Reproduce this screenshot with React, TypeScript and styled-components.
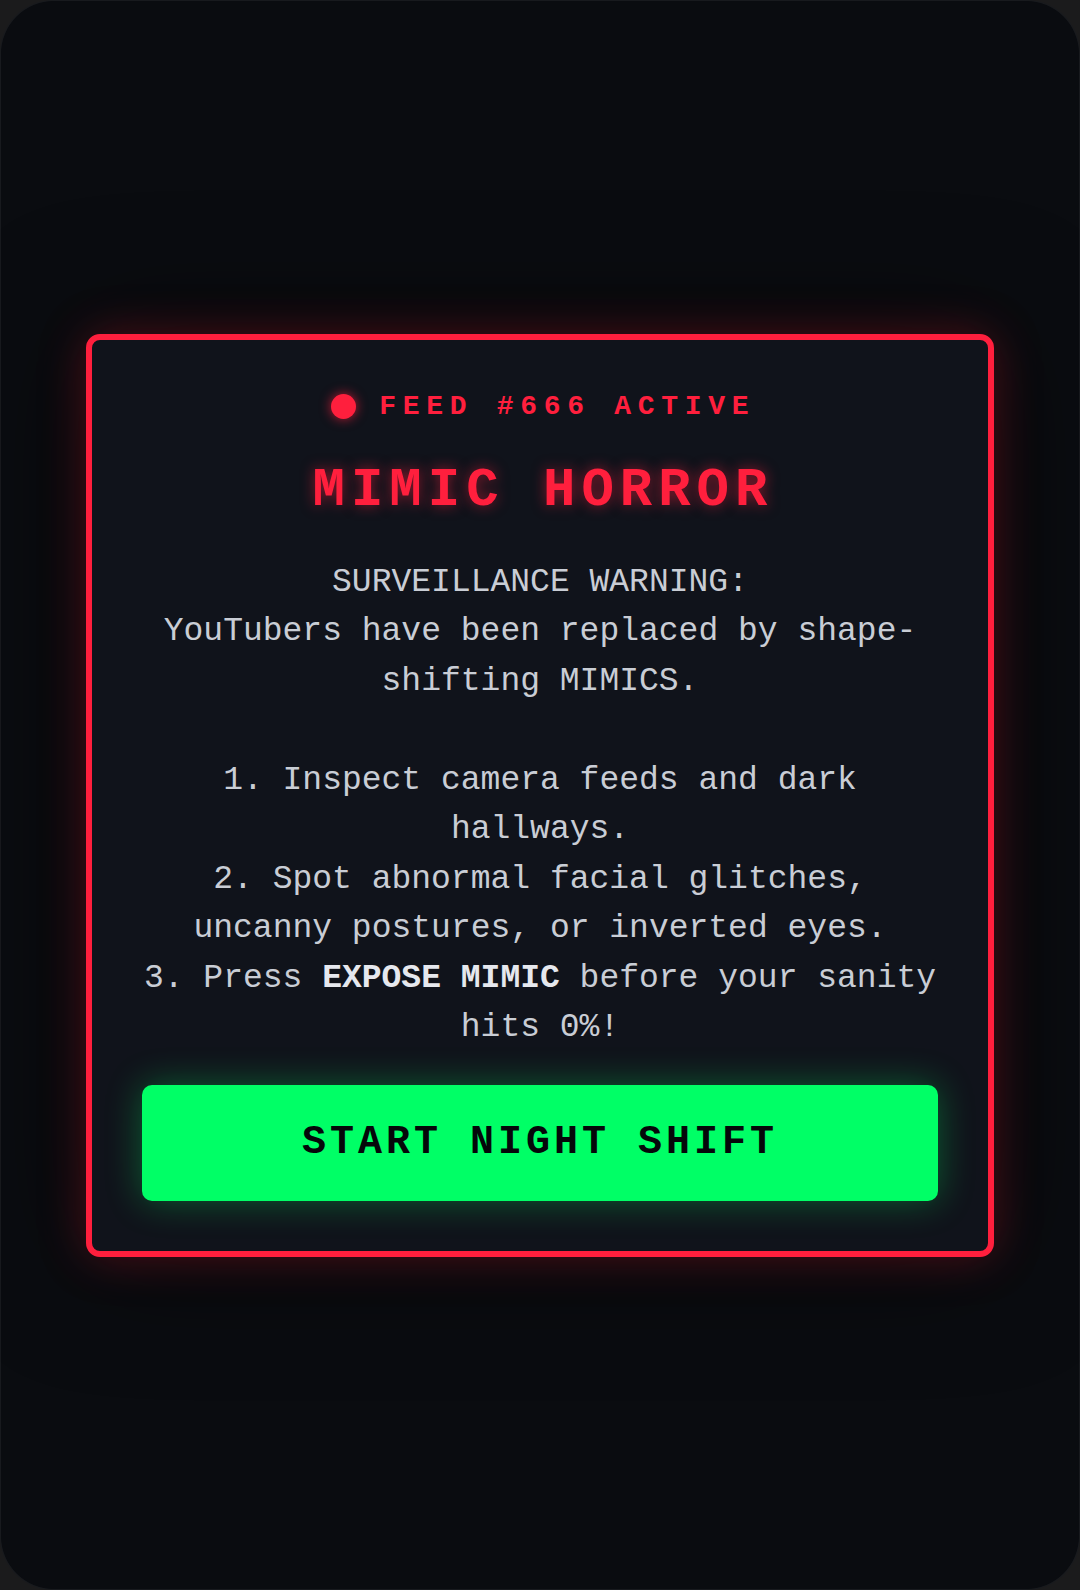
import React from 'react';
import styled, { createGlobalStyle } from 'styled-components';

const RED = '#ff1f3d';
const GREEN = '#00ff66';

const GlobalStyle = createGlobalStyle`
  html, body {
    margin: 0;
    padding: 0;
    background: #1b1b1c;
  }
  * {
    box-sizing: border-box;
  }
`;

const Screen = styled.div`
  width: 1080px;
  height: 1590px;
  border-radius: 54px;
  background: #0a0c10;
  border: 1px solid rgba(255, 255, 255, 0.06);
  display: flex;
  align-items: center;
  justify-content: center;
  font-family: 'Liberation Mono', 'Courier New', monospace;
`;

const Card = styled.div`
  width: 908px;
  border: 6px solid ${RED};
  border-radius: 14px;
  background: #10131b;
  padding: 50px;
  display: flex;
  flex-direction: column;
  align-items: center;
  box-shadow: 0 0 48px rgba(255, 31, 61, 0.28), 0 0 120px rgba(0, 0, 0, 0.6);
`;

const FeedRow = styled.div`
  display: flex;
  align-items: center;
  gap: 23px;
  height: 34px;
`;

const LiveDot = styled.span`
  width: 25px;
  height: 25px;
  border-radius: 50%;
  background: ${RED};
  box-shadow: 0 0 12px rgba(255, 31, 61, 0.75);
`;

const FeedLabel = styled.span`
  color: ${RED};
  font-size: 28px;
  font-weight: 700;
  letter-spacing: 6.7px;
  margin-right: -6.7px;
  line-height: 34px;
`;

const Title = styled.h1`
  margin: 36px 0 0;
  color: ${RED};
  font-size: 54px;
  font-weight: 700;
  letter-spacing: 6px;
  margin-right: -6px;
  line-height: 61px;
  text-shadow: 0 0 14px rgba(255, 31, 61, 0.55);
`;

const Briefing = styled.p`
  margin: 37px 0 0;
  width: 100%;
  color: #c9cdd5;
  font-size: 33px;
  line-height: 49.5px;
  text-align: center;
  white-space: pre-line;

  strong {
    color: #e6e8ee;
    font-weight: 700;
  }
`;

const StartButton = styled.button`
  margin-top: 32px;
  width: 100%;
  height: 116px;
  border: none;
  border-radius: 10px;
  background: ${GREEN};
  color: #05070a;
  font-family: inherit;
  font-size: 40px;
  font-weight: 700;
  letter-spacing: 4px;
  cursor: pointer;
  box-shadow: 0 0 36px rgba(0, 255, 102, 0.32);
`;

export default function App() {
  return (
    <>
      <GlobalStyle />
      <Screen>
        <Card>
          <FeedRow>
            <LiveDot />
            <FeedLabel>FEED #666 ACTIVE</FeedLabel>
          </FeedRow>
          <Title>MIMIC HORROR</Title>
          <Briefing>
            {'SURVEILLANCE WARNING:\nYouTubers have been replaced by shape-shifting MIMICS.\n\n1. Inspect camera feeds and dark hallways.\n2. Spot abnormal facial glitches, uncanny postures, or inverted eyes.\n3. Press '}
            <strong>EXPOSE MIMIC</strong>
            {' before your sanity hits 0%!'}
          </Briefing>
          <StartButton>START NIGHT SHIFT</StartButton>
        </Card>
      </Screen>
    </>
  );
}
